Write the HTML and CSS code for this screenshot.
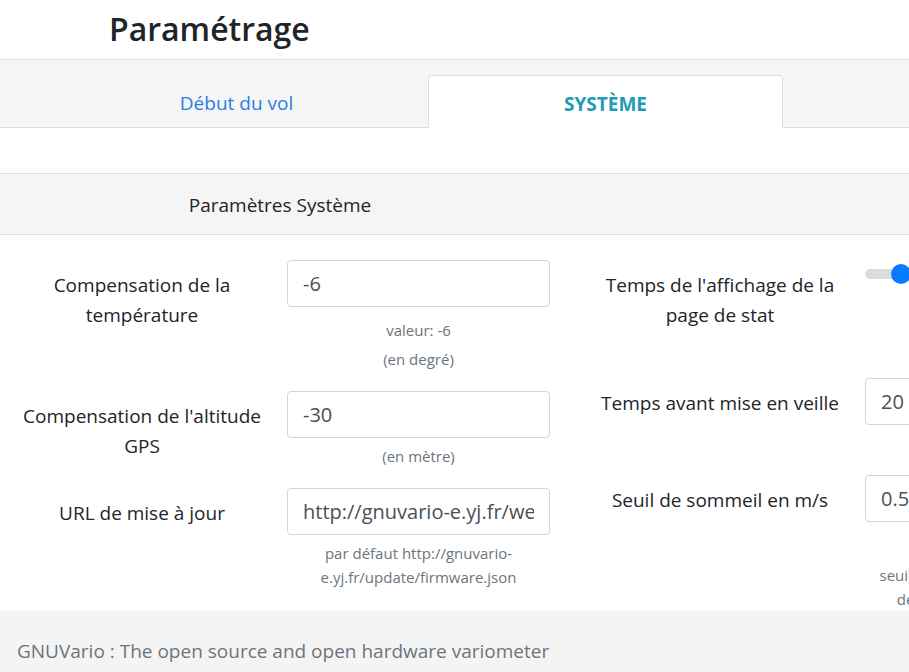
FILE: index.html
```html
<!DOCTYPE html>
<html lang="fr">
<head>
<meta charset="utf-8">
<title>Paramétrage</title>
<link rel="stylesheet" href="styles.css">
</head>
<body>
<div class="page">
  <header class="title-bar"><h1>Paramétrage</h1></header>
  <nav class="tabs">
    <a class="tab">Début du vol</a>
    <a class="tab active">SYSTÈME</a>
  </nav>
  <div class="spacer"></div>
  <section class="card">
    <div class="card-header"><span class="card-title">Paramètres Système</span></div>
    <div class="card-body">
      <div class="col">
        <div class="field">
          <label class="lbl">Compensation de la température</label>
          <div class="ctl">
            <div class="input"><span class="txt">-6</span></div>
            <div class="help val">valeur: -6</div>
            <div class="help second">(en degré)</div>
          </div>
        </div>
        <div class="field">
          <label class="lbl">Compensation de l'altitude GPS</label>
          <div class="ctl">
            <div class="input"><span class="txt">-30</span></div>
            <div class="help">(en mètre)</div>
          </div>
        </div>
        <div class="field">
          <label class="lbl">URL de mise à jour</label>
          <div class="ctl">
            <div class="input"><span class="txt">http://gnuvario-e.yj.fr/webupdate/firmware.json</span></div>
            <div class="help wrap">par défaut http://gnuvario-e.yj.fr/update/firmware.json</div>
          </div>
        </div>
      </div>
      <div class="col">
        <div class="field first-right">
          <label class="lbl">Temps de l'affichage de la page de stat</label>
          <div class="ctl">
            <div class="switch"><span class="track"></span><span class="knob"></span></div>
          </div>
        </div>
        <div class="field">
          <label class="lbl">Temps avant mise en veille</label>
          <div class="ctl">
            <div class="input"><span class="txt">20</span></div>
            <div class="help">&nbsp;</div>
          </div>
        </div>
        <div class="field">
          <label class="lbl">Seuil de sommeil en m/s</label>
          <div class="ctl">
            <div class="input"><span class="txt">0.5</span></div>
            <div class="help far">seuil de détection de mouvement<br>de mouvement pour la veille</div>
          </div>
        </div>
      </div>
    </div>
  </section>
  <footer class="footer">GNUVario : The open source and open hardware variometer</footer>
</div>
</body>
</html>
```

FILE: styles.css
```css
html, body {
  margin: 0;
  padding: 0;
  overflow: hidden;
  background: #fff;
}
body {
  font-family: "Open Sans", "Noto Sans", sans-serif;
  color: #212529;
}
.page {
  width: 1160px;
}
.title-bar h1 {
  margin: 0;
  padding: 10px 0 11px 109px;
  font-size: 32px;
  line-height: 38px;
  font-weight: 600;
  color: #212529;
}
.tabs {
  display: flex;
  gap: 14px;
  padding: 15px 0 0 59px;
  background: #f5f5f5;
  border-top: 1px solid #dedede;
  border-bottom: 1px solid #dedede;
  height: 52px;
}
.tab {
  width: 355px;
  box-sizing: border-box;
  display: flex;
  align-items: center;
  justify-content: center;
  font-size: 19px;
  color: #2b7de3;
  height: 53px;
  margin-bottom: -1px;
  padding-top: 3px;
}
.tab.active {
  background: #fff;
  border: 1px solid #dedede;
  border-bottom: none;
  border-radius: 4px 4px 0 0;
  color: #1f9cb4;
  font-weight: 700;
}
.spacer {
  height: 45px;
}
.card-header {
  background: #f5f5f5;
  border-top: 1px solid #dedede;
  border-bottom: 1px solid #dedede;
  box-sizing: border-box;
  height: 62px;
  padding-top: 2px;
  display: flex;
  align-items: center;
}
.card-title {
  width: 560px;
  text-align: center;
  font-size: 19px;
}
.card-body {
  display: grid;
  grid-template-columns: 578px 578px;
  padding-top: 25px;
  height: 351px;
}
.col {
  display: flex;
  flex-direction: column;
  gap: 20px;
}
.field {
  display: grid;
  grid-template-columns: 287px 263px;
}
.lbl {
  padding: 10px 21px 0 18px;
  text-align: center;
  font-size: 19px;
  line-height: 30px;
}
.first-right {
  min-height: 98px;
}
.ctl {
  display: flex;
  flex-direction: column;
  align-items: stretch;
  min-width: 0;
}
.input {
  display: flex;
  align-items: center;
  height: 47px;
  box-sizing: border-box;
  border: 1px solid #d4d4d4;
  border-radius: 4px;
  padding: 0 15px;
  font-size: 20px;
  color: #495057;
  overflow: hidden;
}
.txt {
  display: block;
  white-space: nowrap;
  overflow: hidden;
  min-width: 0;
  flex: 1;
}
.help {
  margin-top: 6px;
  font-size: 15px;
  line-height: 24px;
  color: #6c757d;
  text-align: center;
  white-space: nowrap;
}
.help.val {
  margin-top: 11px;
}
.help.second {
  margin-top: 5px;
}
.help.wrap {
  white-space: normal;
}
.help.far {
  margin-top: 41px;
}
.switch {
  position: relative;
  height: 30px;
  margin-top: 3px;
}
.track {
  position: absolute;
  left: 0;
  top: 6px;
  width: 40px;
  height: 10px;
  border-radius: 5px;
  background: #dcdcdc;
}
.knob {
  position: absolute;
  left: 26px;
  top: 1px;
  width: 20px;
  height: 20px;
  border-radius: 50%;
  background: #0a7bff;
}
.footer {
  background: #f4f4f4;
  height: 61px;
  box-sizing: border-box;
  padding: 27px 0 0 17px;
  font-size: 19px;
  line-height: 26px;
  color: #6c757d;
}
```
